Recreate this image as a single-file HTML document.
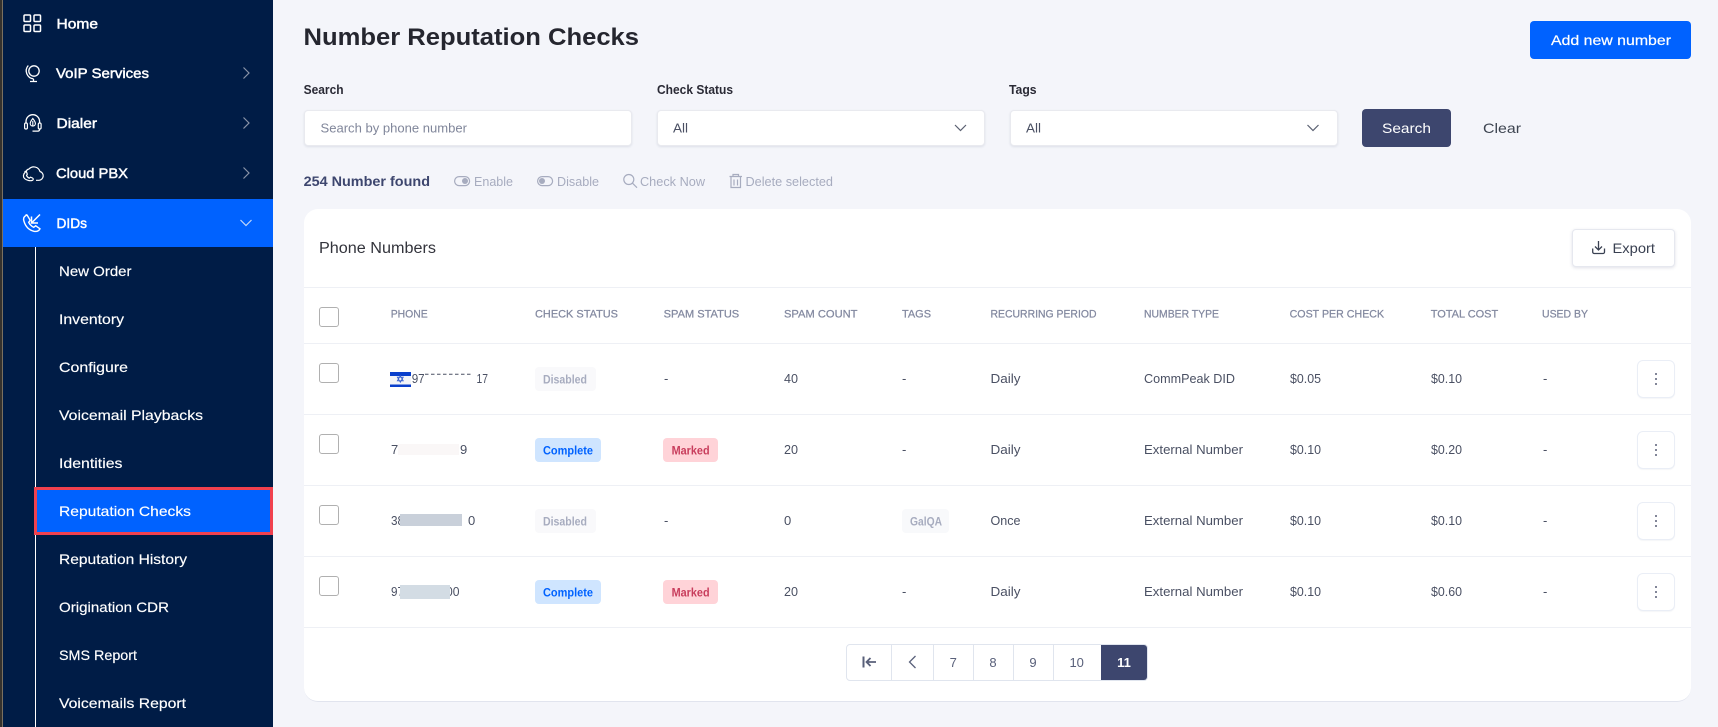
<!DOCTYPE html>
<html lang="en">
<head>
<meta charset="utf-8">
<title>Number Reputation Checks</title>
<style>
html,body{margin:0;padding:0;width:1718px;height:727px;overflow:hidden;background:#f4f5fa;font-family:"Liberation Sans",sans-serif}
.b{position:absolute;box-sizing:border-box}
svg.o{position:absolute;left:0;top:0}
svg text{font-family:"Liberation Sans",sans-serif;white-space:pre}
.in{background:#fff;border:1px solid #e9eaef;border-radius:4px;box-shadow:0 1px 2px rgba(60,70,110,.12);height:36px;top:110px}
.cb{left:319px;width:20px;height:20px;border:1px solid #b0b0b0;border-radius:3px;background:#fff}
.ln{left:304px;width:1387px;height:1px;background:#eef0f5}
.kb{left:1637px;width:38px;height:38px;border:1px solid #eaeef6;border-radius:6px;background:#fff;box-shadow:0 1px 1px rgba(60,70,110,.05)}
.bd{height:24px;border-radius:4px}
.sv{fill:#fff;stroke:#fff;stroke-width:.45;font-size:14px}
.ss{fill:#fff;stroke:#fff;stroke-width:.15;font-size:14px;transform:translateY(-.6px)}
.th{fill:#8389a0;stroke:#8389a0;stroke-width:.25;font-size:11px;transform:translateY(-.4px)}
.td{fill:#4a5063;font-size:13px;transform:translateY(-.7px)}
.lb{fill:#2a2a35;font-size:13px;font-weight:700}
.ac{fill:#a7acbf;font-size:13px}
.bg{font-size:12px;font-weight:700}
.pg{fill:#59607a;font-size:13px}
</style>
</head>
<body>
<div class="b" style="left:0;top:0;width:2px;height:727px;background:#35322e"></div>
<div class="b" style="left:2px;top:0;width:1px;height:727px;background:#7a7060"></div>
<div class="b" style="left:3px;top:0;width:270px;height:727px;background:#001c46"></div>
<div class="b" style="left:3px;top:199px;width:270px;height:48px;background:#0062ff"></div>
<div class="b" style="left:35px;top:247px;width:1px;height:480px;background:#fff"></div>
<div class="b" style="left:34px;top:487px;width:239px;height:48px;background:#0062ff;border:3px solid #f0414e"></div>

<div class="b in" style="left:304px;width:328px"></div>
<div class="b in" style="left:657px;width:328px"></div>
<div class="b in" style="left:1010px;width:328px"></div>
<div class="b" style="left:1530px;top:21px;width:161px;height:38px;background:#0062ff;border-radius:4px"></div>
<div class="b" style="left:1362px;top:109px;width:89px;height:38px;background:#3d466e;border-radius:4px"></div>

<div class="b" style="left:304px;top:209px;width:1387px;height:493px;background:#fff;border-radius:14px;border-bottom:1px solid #e1e4ee"></div>
<div class="b" style="left:1572px;top:229px;width:103px;height:38px;background:#fff;border:1px solid #e6e8ef;border-radius:4px;box-shadow:0 1px 3px rgba(60,70,110,.16)"></div>
<div class="b ln" style="top:287px"></div>
<div class="b ln" style="top:343px"></div>
<div class="b ln" style="top:414px"></div>
<div class="b ln" style="top:485px"></div>
<div class="b ln" style="top:556px"></div>
<div class="b ln" style="top:627px"></div>

<div class="b cb" style="top:307px"></div>
<div class="b cb" style="top:363px"></div>
<div class="b cb" style="top:434px"></div>
<div class="b cb" style="top:505px"></div>
<div class="b cb" style="top:576px"></div>

<div class="b kb" style="top:360px"></div>
<div class="b kb" style="top:431px"></div>
<div class="b kb" style="top:502px"></div>
<div class="b kb" style="top:573px"></div>

<div class="b bd" style="left:535px;top:367px;width:61px;background:#f9f9fb"></div>
<div class="b bd" style="left:535px;top:509px;width:61px;background:#f9f9fb"></div>
<div class="b bd" style="left:535px;top:438px;width:66px;background:#cfe5ff"></div>
<div class="b bd" style="left:535px;top:580px;width:66px;background:#cfe5ff"></div>
<div class="b bd" style="left:663px;top:438px;width:55px;background:#ffd3d8"></div>
<div class="b bd" style="left:663px;top:580px;width:55px;background:#ffd3d8"></div>
<div class="b bd" style="left:902px;top:509px;width:47px;background:#f8f9fb"></div>

<div class="b" style="left:846px;top:644px;width:302px;height:37px;background:#fff;border:1px solid #e0e5ee;border-radius:4px"></div>
<div class="b" style="left:891px;top:644px;width:1px;height:37px;background:#e0e5ee"></div>
<div class="b" style="left:933px;top:644px;width:1px;height:37px;background:#e0e5ee"></div>
<div class="b" style="left:973px;top:644px;width:1px;height:37px;background:#e0e5ee"></div>
<div class="b" style="left:1013px;top:644px;width:1px;height:37px;background:#e0e5ee"></div>
<div class="b" style="left:1053px;top:644px;width:1px;height:37px;background:#e0e5ee"></div>
<div class="b" style="left:1101px;top:645px;width:46px;height:35px;background:#3d466e;border-radius:0 3px 3px 0"></div>

<svg class="o" width="1718" height="727" viewBox="0 0 1718 727" xmlns="http://www.w3.org/2000/svg">
<!-- sidebar icons -->
<g fill="none" stroke="#fff" stroke-width="1.5">
<rect x="24" y="15" width="6.5" height="6.5" rx="1"/><rect x="34" y="15" width="6.5" height="6.5" rx="1"/>
<rect x="24" y="25" width="6.5" height="6.5" rx="1"/><rect x="34" y="25" width="6.5" height="6.5" rx="1"/>
<circle cx="34" cy="71" r="5.2" stroke-width="1.3"/>
<path d="M28.3 65.5a8 8 0 0 0 5.2 13.3M33.5 79v2.5M30 81.5h7" stroke-width="1.3"/>
<path d="M26 123v-1.5a6.8 6.8 0 0 1 13.6 0V123M39.6 129v.5a1.6 1.6 0 0 1-1.6 1.6h-5.5" stroke-width="1.3"/>
<rect x="24.6" y="123" width="2.8" height="6" rx="1.3" stroke-width="1.2"/><rect x="38.3" y="123" width="2.8" height="6" rx="1.3" stroke-width="1.2"/>
<path d="M32.8 118.5c-1.5 1.9-2.6 3.4-2.6 5 0 1.5 1.1 2.6 2.6 2.6s2.6-1.1 2.6-2.6c0-1.6-1.1-3.1-2.6-5zM32.8 121v5" stroke-width="1.1"/>
<path d="M26 172.500a3.800 3.800 0 0 1 3-3.500 6.500 6.500 0 0 1 11 2.500 4.500 4.500 0 0 1-1 8.800h-3" stroke-width="1.2"/>
<path d="M25 172.500c-2 1.800-2 4.500-.5 6 1.800 1.800 5.500 2.800 8 1.800 1-.5 1-1.800 0-2.300l-2-.8-1.200 1c-1.300-.5-2.300-1.500-2.800-2.800l.8-1.200-.8-2.300c-.3-.6-1-.8-1.500-.4z" stroke-width="1.2"/>
<path d="M26 215.500c-2 1-3 3-2 5.800 1.500 5 5 8.800 10 10 3 .5 5-.5 6-2.500l-4.300-3-2 1.500c-2-1-4-3-5-5l1.500-2-3-5c-.3-.4-.8-.5-1.200-.3z" stroke-width="1.4"/>
<path d="M40 214.500l-8.500 8.500M31.500 216.500V223H38" stroke-width="1.5"/>
</g>
<g fill="none" stroke="#8a94a8" stroke-width="1.2">
<path d="M243.500 67.500l5.500 5.500-5.500 5.500M243.500 117.500l5.500 5.500-5.500 5.500M243.500 167.500l5.500 5.500-5.500 5.500"/>
</g>
<path d="M240.500 220l5.500 5.500 5.500-5.500" fill="none" stroke="#c5d8f8" stroke-width="1.2"/>

<!-- sidebar text -->
<text class="sv" x="56.500" y="28.300" textLength="41.500" lengthAdjust="spacingAndGlyphs">Home</text>
<text class="sv" x="56" y="78" textLength="93" lengthAdjust="spacingAndGlyphs">VoIP Services</text>
<text class="sv" x="56.500" y="128" textLength="40.500" lengthAdjust="spacingAndGlyphs">Dialer</text>
<text class="sv" x="56" y="178" textLength="72" lengthAdjust="spacingAndGlyphs">Cloud PBX</text>
<text class="sv" x="56.500" y="228" textLength="30.500" lengthAdjust="spacingAndGlyphs">DIDs</text>
<text class="ss" x="59" y="276.500" textLength="72.500" lengthAdjust="spacingAndGlyphs">New Order</text>
<text class="ss" x="59" y="324.500" textLength="65" lengthAdjust="spacingAndGlyphs">Inventory</text>
<text class="ss" x="59" y="372.500" textLength="69" lengthAdjust="spacingAndGlyphs">Configure</text>
<text class="ss" x="59" y="420.500" textLength="144" lengthAdjust="spacingAndGlyphs">Voicemail Playbacks</text>
<text class="ss" x="59" y="468.500" textLength="63.500" lengthAdjust="spacingAndGlyphs">Identities</text>
<text class="ss" x="59" y="516.500" textLength="132" lengthAdjust="spacingAndGlyphs">Reputation Checks</text>
<text class="ss" x="59" y="564.500" textLength="128" lengthAdjust="spacingAndGlyphs">Reputation History</text>
<text class="ss" x="59" y="612.500" textLength="110" lengthAdjust="spacingAndGlyphs">Origination CDR</text>
<text class="ss" x="59" y="660.500" textLength="78" lengthAdjust="spacingAndGlyphs">SMS Report</text>
<text class="ss" x="59" y="708.500" textLength="127" lengthAdjust="spacingAndGlyphs">Voicemails Report</text>

<!-- header -->
<text x="303.500" y="45" fill="#25262f" font-size="24" font-weight="700" textLength="335.500" lengthAdjust="spacingAndGlyphs">Number Reputation Checks</text>
<text x="1551" y="45" fill="#fff" stroke="#fff" stroke-width=".2" font-size="14" textLength="120" lengthAdjust="spacingAndGlyphs">Add new number</text>
<text class="lb" x="303.600" y="94" textLength="40" lengthAdjust="spacingAndGlyphs">Search</text>
<text class="lb" x="657" y="94" textLength="76" lengthAdjust="spacingAndGlyphs">Check Status</text>
<text class="lb" x="1009" y="94" textLength="27.600" lengthAdjust="spacingAndGlyphs">Tags</text>
<text x="320.500" y="132.500" fill="#80869a" font-size="13" textLength="146.500" lengthAdjust="spacingAndGlyphs">Search by phone number</text>
<text x="673" y="132.500" fill="#4a5063" font-size="13" textLength="15" lengthAdjust="spacingAndGlyphs">All</text>
<text x="1026" y="132.500" fill="#4a5063" font-size="13" textLength="15" lengthAdjust="spacingAndGlyphs">All</text>
<path d="M955 125l5.500 5.500 5.500-5.500M1307.500 125l5.500 5.500 5.500-5.500" fill="none" stroke="#5b6172" stroke-width="1.200"/>
<text x="1382" y="133" fill="#fff" font-size="14" textLength="49" lengthAdjust="spacingAndGlyphs">Search</text>
<text x="1483" y="133" fill="#3d4450" font-size="14" textLength="38" lengthAdjust="spacingAndGlyphs">Clear</text>

<!-- action row -->
<text x="303.600" y="186" fill="#3d466e" font-size="13.500" font-weight="700" textLength="126.400" lengthAdjust="spacingAndGlyphs">254 Number found</text>
<g fill="none" stroke="#a7acbf" stroke-width="1.200">
<rect x="454.600" y="176.600" width="15" height="9" rx="4.500"/><rect x="537.600" y="176.600" width="15" height="9" rx="4.500"/>
<circle cx="628.800" cy="179.500" r="5"/><path d="M632.500 183.200l4.500 4.500"/>
<path d="M729.500 176.500h12.500M733 176v-1.500h5.500v1.500M731 177v10.500h9.500V177M734 179.500v6M737.500 179.500v6"/>
</g>
<circle cx="465" cy="181" r="3" fill="#a7acbf"/><circle cx="542" cy="181" r="3" fill="#a7acbf"/>
<text class="ac" x="474" y="186" textLength="39" lengthAdjust="spacingAndGlyphs">Enable</text>
<text class="ac" x="557" y="186" textLength="42" lengthAdjust="spacingAndGlyphs">Disable</text>
<text class="ac" x="640" y="186" textLength="65" lengthAdjust="spacingAndGlyphs">Check Now</text>
<text class="ac" x="745.500" y="186" textLength="87.500" lengthAdjust="spacingAndGlyphs">Delete selected</text>

<!-- card head -->
<text x="319" y="253" fill="#33343c" font-size="15.500" textLength="117" lengthAdjust="spacingAndGlyphs">Phone Numbers</text>
<path d="M1598.500 241v8.500M1595 246.500l3.500 3.500 3.500-3.500M1592.700 248.500v3.500a1.500 1.500 0 0 0 1.500 1.500h8.800a1.500 1.500 0 0 0 1.500-1.500v-3.500" fill="none" stroke="#3a4152" stroke-width="1.300"/>
<text x="1612.500" y="253" fill="#3a4152" font-size="14" textLength="42.500" lengthAdjust="spacingAndGlyphs">Export</text>

<!-- table head -->
<text class="th" x="390.700" y="318" textLength="37" lengthAdjust="spacingAndGlyphs">PHONE</text>
<text class="th" x="535" y="318" textLength="83" lengthAdjust="spacingAndGlyphs">CHECK STATUS</text>
<text class="th" x="663.700" y="318" textLength="75.500" lengthAdjust="spacingAndGlyphs">SPAM STATUS</text>
<text class="th" x="784" y="318" textLength="73.500" lengthAdjust="spacingAndGlyphs">SPAM COUNT</text>
<text class="th" x="902" y="318" textLength="29" lengthAdjust="spacingAndGlyphs">TAGS</text>
<text class="th" x="990.500" y="318" textLength="106" lengthAdjust="spacingAndGlyphs">RECURRING PERIOD</text>
<text class="th" x="1144" y="318" textLength="75" lengthAdjust="spacingAndGlyphs">NUMBER TYPE</text>
<text class="th" x="1289.600" y="318" textLength="94.500" lengthAdjust="spacingAndGlyphs">COST PER CHECK</text>
<text class="th" x="1430.700" y="318" textLength="67.500" lengthAdjust="spacingAndGlyphs">TOTAL COST</text>
<text class="th" x="1542" y="318" textLength="46" lengthAdjust="spacingAndGlyphs">USED BY</text>

<!-- phone cells -->
<rect x="390" y="372" width="21" height="15" fill="#f3f4f8"/>
<rect x="390" y="372" width="21" height="4" fill="#0a3fcc"/>
<rect x="390" y="384.500" width="21" height="2.500" fill="#0a3fcc"/>
<path d="M400.300 375.800l2.900 5h-5.800zM400.300 382.200l-2.900-5h5.800z" fill="none" stroke="#3a62d0" stroke-width=".9"/>
<text class="td" x="411.700" y="383.500" textLength="13" lengthAdjust="spacingAndGlyphs">97</text>
<path d="M425 374.300h48" stroke="#4a5063" stroke-width="1" stroke-dasharray="3.500 2.500" fill="none"/>
<text class="td" x="476.500" y="383.500" textLength="11.500" lengthAdjust="spacingAndGlyphs">17</text>

<text class="td" x="391" y="454.500">7</text>
<rect x="398" y="444" width="61" height="11" fill="#faf7f7"/>
<text class="td" x="460" y="454.500">9</text>

<text class="td" x="391" y="525.500" textLength="13" lengthAdjust="spacingAndGlyphs">38</text>
<rect x="400" y="514" width="62" height="12" fill="#c9d0da"/>
<text class="td" x="468" y="525.500">0</text>

<text class="td" x="391" y="596.500" textLength="13" lengthAdjust="spacingAndGlyphs">97</text>
<text class="td" x="446" y="596.500" textLength="13.500" lengthAdjust="spacingAndGlyphs">00</text>
<rect x="400" y="585" width="50" height="14" fill="#d3dce4"/>

<!-- badges -->
<text class="bg" fill="#a7acbf" x="543" y="383.500" textLength="44" lengthAdjust="spacingAndGlyphs">Disabled</text>
<text class="bg" fill="#a7acbf" x="543" y="525.500" textLength="44" lengthAdjust="spacingAndGlyphs">Disabled</text>
<text class="bg" fill="#0062ff" x="543" y="454.500" textLength="50" lengthAdjust="spacingAndGlyphs">Complete</text>
<text class="bg" fill="#0062ff" x="543" y="596.500" textLength="50" lengthAdjust="spacingAndGlyphs">Complete</text>
<text class="bg" fill="#c83d5c" x="671.600" y="454.500" textLength="38" lengthAdjust="spacingAndGlyphs">Marked</text>
<text class="bg" fill="#c83d5c" x="671.600" y="596.500" textLength="38" lengthAdjust="spacingAndGlyphs">Marked</text>
<text class="bg" fill="#a7acbf" x="910" y="525.500" font-weight="400" textLength="32" lengthAdjust="spacingAndGlyphs">GalQA</text>

<!-- rows -->
<text class="td" x="664" y="383.500">-</text><text class="td" x="664" y="525.500">-</text>
<text class="td" x="784" y="383.500" textLength="14" lengthAdjust="spacingAndGlyphs">40</text>
<text class="td" x="784" y="454.500" textLength="14" lengthAdjust="spacingAndGlyphs">20</text>
<text class="td" x="784" y="525.500">0</text>
<text class="td" x="784" y="596.500" textLength="14" lengthAdjust="spacingAndGlyphs">20</text>
<text class="td" x="902" y="383.500">-</text><text class="td" x="902" y="454.500">-</text><text class="td" x="902" y="596.500">-</text>
<text class="td" x="990.500" y="383.500" textLength="30" lengthAdjust="spacingAndGlyphs">Daily</text>
<text class="td" x="990.500" y="454.500" textLength="30" lengthAdjust="spacingAndGlyphs">Daily</text>
<text class="td" x="990.500" y="525.500" textLength="30" lengthAdjust="spacingAndGlyphs">Once</text>
<text class="td" x="990.500" y="596.500" textLength="30" lengthAdjust="spacingAndGlyphs">Daily</text>
<text class="td" x="1144" y="383.500" textLength="91" lengthAdjust="spacingAndGlyphs">CommPeak DID</text>
<text class="td" x="1144" y="454.500" textLength="99" lengthAdjust="spacingAndGlyphs">External Number</text>
<text class="td" x="1144" y="525.500" textLength="99" lengthAdjust="spacingAndGlyphs">External Number</text>
<text class="td" x="1144" y="596.500" textLength="99" lengthAdjust="spacingAndGlyphs">External Number</text>
<text class="td" x="1290" y="383.500" textLength="31" lengthAdjust="spacingAndGlyphs">$0.05</text>
<text class="td" x="1290" y="454.500" textLength="31" lengthAdjust="spacingAndGlyphs">$0.10</text>
<text class="td" x="1290" y="525.500" textLength="31" lengthAdjust="spacingAndGlyphs">$0.10</text>
<text class="td" x="1290" y="596.500" textLength="31" lengthAdjust="spacingAndGlyphs">$0.10</text>
<text class="td" x="1431" y="383.500" textLength="31" lengthAdjust="spacingAndGlyphs">$0.10</text>
<text class="td" x="1431" y="454.500" textLength="31" lengthAdjust="spacingAndGlyphs">$0.20</text>
<text class="td" x="1431" y="525.500" textLength="31" lengthAdjust="spacingAndGlyphs">$0.10</text>
<text class="td" x="1431" y="596.500" textLength="31" lengthAdjust="spacingAndGlyphs">$0.60</text>
<text class="td" x="1543" y="383.500">-</text><text class="td" x="1543" y="454.500">-</text><text class="td" x="1543" y="525.500">-</text><text class="td" x="1543" y="596.500">-</text>

<!-- kebabs -->
<g fill="#5a6078">
<circle cx="1656" cy="374" r="1"/><circle cx="1656" cy="379" r="1"/><circle cx="1656" cy="384" r="1"/>
<circle cx="1656" cy="445" r="1"/><circle cx="1656" cy="450" r="1"/><circle cx="1656" cy="455" r="1"/>
<circle cx="1656" cy="516" r="1"/><circle cx="1656" cy="521" r="1"/><circle cx="1656" cy="526" r="1"/>
<circle cx="1656" cy="587" r="1"/><circle cx="1656" cy="592" r="1"/><circle cx="1656" cy="597" r="1"/>
</g>

<!-- pagination -->
<path d="M863.500 656.500v11" stroke="#59607a" stroke-width="2" fill="none"/>
<path d="M876 662h-9M870.500 658l-4 4 4 4" stroke="#59607a" stroke-width="1.800" fill="none"/>
<path d="M915.500 656l-6 6 6 6" stroke="#59607a" stroke-width="1.300" fill="none"/>
<text class="pg" x="953.300" y="667" text-anchor="middle">7</text>
<text class="pg" x="993" y="667" text-anchor="middle">8</text>
<text class="pg" x="1033" y="667" text-anchor="middle">9</text>
<text class="pg" x="1076.700" y="667" text-anchor="middle">10</text>
<text x="1124" y="667" text-anchor="middle" fill="#fff" font-size="13" font-weight="700">11</text>
</svg>
</body>
</html>
